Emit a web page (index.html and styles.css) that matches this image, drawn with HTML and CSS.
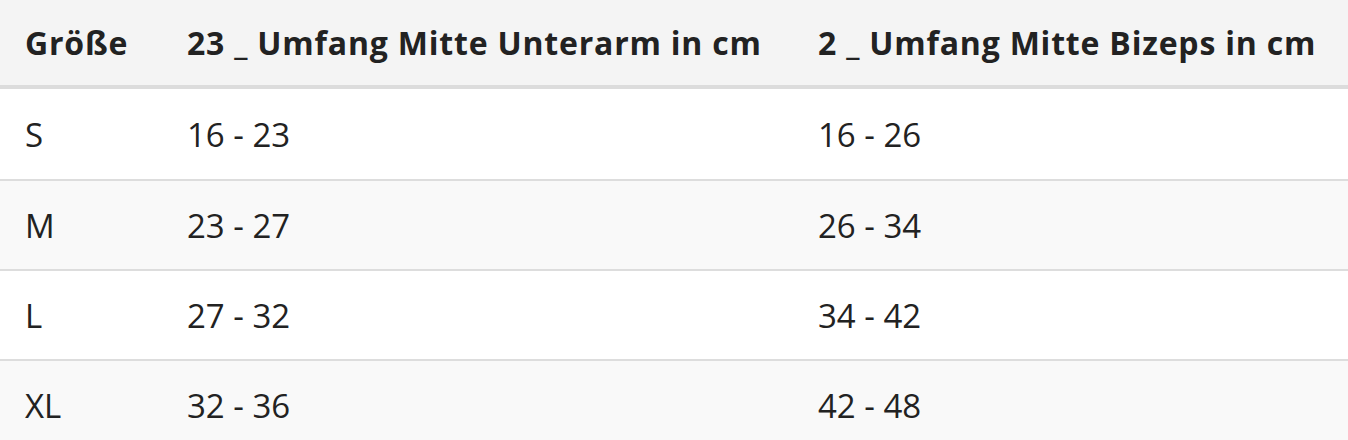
FILE: index.html
```html
<!DOCTYPE html>
<html lang="de">
<head>
<meta charset="utf-8">
<title>Größentabelle</title>
<link rel="stylesheet" href="styles.css">
</head>
<body>
<div class="table">
  <div class="row head">
    <div class="cell">Größe</div>
    <div class="cell">23 _ Umfang Mitte Unterarm in cm</div>
    <div class="cell">2 _ Umfang Mitte Bizeps in cm</div>
  </div>
  <div class="row first">
    <div class="cell">S</div>
    <div class="cell">16 - 23</div>
    <div class="cell">16 - 26</div>
  </div>
  <div class="row alt">
    <div class="cell">M</div>
    <div class="cell">23 - 27</div>
    <div class="cell">26 - 34</div>
  </div>
  <div class="row">
    <div class="cell">L</div>
    <div class="cell">27 - 32</div>
    <div class="cell">34 - 42</div>
  </div>
  <div class="row alt last">
    <div class="cell">XL</div>
    <div class="cell">32 - 36</div>
    <div class="cell">42 - 48</div>
  </div>
</div>
</body>
</html>
```
FILE: styles.css
```css
html, body {
  margin: 0;
  padding: 0;
  background: #ffffff;
}
body {
  font-family: "Open Sans", "Liberation Sans", sans-serif;
  color: #222222;
  overflow: hidden;
}
.table {
  display: flex;
  flex-direction: column;
  width: 1348px;
}
.row {
  display: grid;
  grid-template-columns: 162px 631px 1fr;
  align-items: center;
  height: 88px;
  border-bottom: 2px solid #dddddd;
  font-size: 33px;
}
.row.first {
  height: 90px;
}
.row.alt {
  background: #f9f9f9;
}
.row.last {
  border-bottom: none;
}
.row.head {
  height: 85px;
  background: #f4f4f4;
  border-bottom: 4px solid #dcdcdc;
  font-weight: 700;
  font-size: 32px;
  letter-spacing: 0.8px;
}
.cell {
  padding-left: 25px;
  white-space: nowrap;
}
```
